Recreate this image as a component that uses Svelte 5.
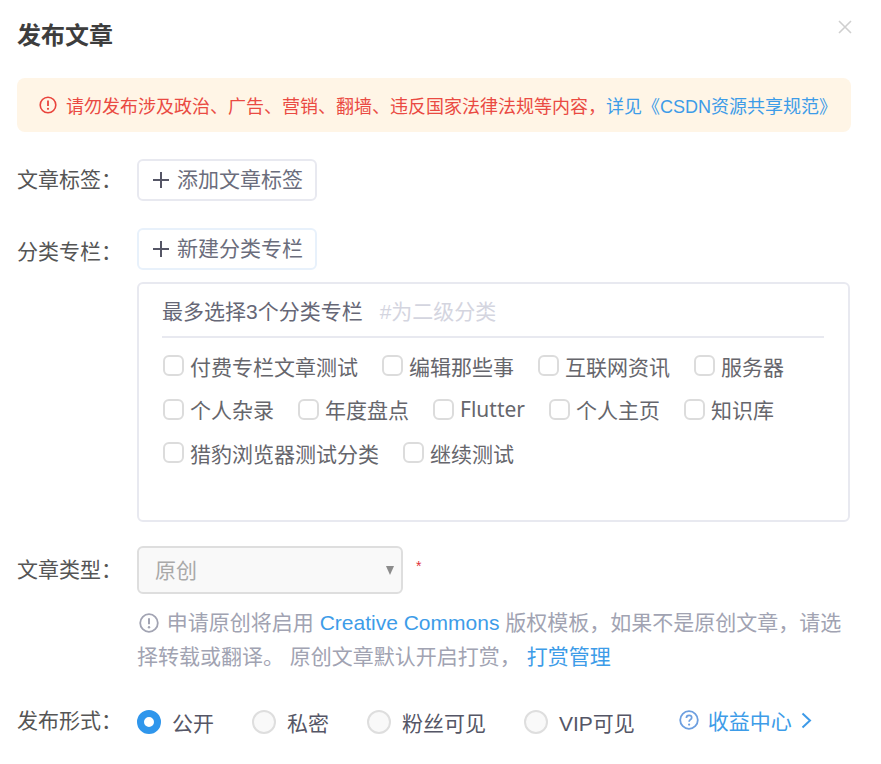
<script lang="ts">
  const columns = [
    ["付费专栏文章测试", "编辑那些事", "互联网资讯", "服务器"],
    ["个人杂录", "年度盘点", "Flutter", "个人主页", "知识库"],
    ["猎豹浏览器测试分类", "继续测试"],
  ];
  const forms = ["公开", "私密", "粉丝可见", "VIP可见"];
  let form = $state("公开");
</script>

<div class="dialog">
  <header class="head">
    <h2>发布文章</h2>
    <svg class="close" viewBox="0 0 14 14" width="14" height="14">
      <path d="M1 1l12 12M13 1L1 13" stroke="#cfcfcf" stroke-width="1.6" fill="none" />
    </svg>
  </header>

  <div class="alert">
    <svg viewBox="0 0 18 18" width="18" height="18">
      <circle cx="9" cy="9" r="7.8" stroke="#e9433b" stroke-width="1.6" fill="none" />
      <path d="M9 4.4v5.6" stroke="#e9433b" stroke-width="1.8" fill="none" />
      <circle cx="9" cy="12.8" r="1.1" fill="#e9433b" />
    </svg>
    <span class="alert-text">请勿发布涉及政治、广告、营销、翻墙、违反国家法律法规等内容，</span><a class="alert-link" href="#top">详见《CSDN资源共享规范》</a>
  </div>

  <div class="row tags">
    <span class="label">文章标签：</span>
    <button type="button" class="add"><span class="plus"></span>添加文章标签</button>
  </div>

  <div class="row cats">
    <span class="label">分类专栏：</span>
    <div class="cat-body">
      <button type="button" class="add blue"><span class="plus"></span>新建分类专栏</button>
      <div class="panel">
        <div class="panel-head">最多选择3个分类专栏<span class="sub">#为二级分类</span></div>
        <div class="checks">
          {#each columns as line}
            <div class="check-line">
              {#each line as name}
                <label class="check"><input type="checkbox" /><span class="box"></span><span class:latin={name === "Flutter"}>{name}</span></label>
              {/each}
            </div>
          {/each}
        </div>
      </div>
    </div>
  </div>

  <div class="row type">
    <span class="label">文章类型：</span>
    <div class="type-body">
      <div class="select-line">
        <div class="select">原创<span class="caret"></span></div>
        <span class="star">*</span>
      </div>
      <div class="hint">
        <div class="hint-line">
          <svg viewBox="0 0 20 20" width="20" height="20">
            <circle cx="10" cy="10" r="8.8" stroke="#a2a4b3" stroke-width="1.8" fill="none" />
            <path d="M10 5.2v6" stroke="#a2a4b3" stroke-width="2" fill="none" />
            <circle cx="10" cy="14.2" r="1.2" fill="#a2a4b3" />
          </svg>
          申请原创将启用 <a href="#top">Creative Commons</a> 版权模板，如果不是原创文章，请选
        </div>
        <div class="hint-line">择转载或翻译。 原创文章默认开启打赏， <a href="#top">打赏管理</a></div>
      </div>
    </div>
  </div>

  <div class="row pub">
    <span class="label">发布形式：</span>
    <div class="radios">
      {#each forms as f}
        <label class="radio">
          <input type="radio" name="form" value={f} bind:group={form} />
          <span class="dot"></span>{f}
        </label>
      {/each}
      <a class="income" href="#top">
        <svg viewBox="0 0 20 20" width="20" height="20">
          <circle cx="10" cy="10" r="8.8" stroke="#6d9fe0" stroke-width="1.8" fill="none" />
          <path d="M7.4 8c0-1.6 1.2-2.6 2.7-2.6s2.6 1 2.6 2.3c0 2-2.6 2-2.6 4" stroke="#6d9fe0" stroke-width="1.7" fill="none" />
          <circle cx="10.1" cy="14.6" r="1.1" fill="#6d9fe0" />
        </svg>
        收益中心
        <svg viewBox="0 0 11 17" width="11" height="17">
          <path d="M1.5 1.5L9 8.5l-7.5 7" stroke="#3d9ae8" stroke-width="2" fill="none" />
        </svg>
      </a>
    </div>
  </div>
</div>

<style>
  :global(body) {
    margin: 0;
    background: #fff;
  }

  .dialog {
    width: 834px;
    padding: 0 30px 0 17px;
    font-family: "Liberation Sans", "Noto Sans CJK SC", sans-serif;
    font-size: 21px;
    color: #555666;
  }

  .head {
    display: flex;
    justify-content: space-between;
    height: 78px;
  }

  h2 {
    margin: 0;
    padding-top: 19px;
    font-size: 24px;
    line-height: 34px;
    font-weight: 700;
    color: #3d3d3d;
  }

  .close {
    margin: 20px -1px 0 0;
  }

  .alert {
    display: flex;
    align-items: center;
    height: 54px;
    padding-left: 22px;
    background: #fff5e6;
    border-radius: 8px;
    font-size: 18px;
  }

  .alert svg {
    margin-right: 9px;
  }

  .alert-text {
    color: #ea4a42;
  }

  .alert-link {
    color: #3d9ce8;
    text-decoration: none;
  }

  .row {
    display: flex;
  }

  .label {
    flex: 0 0 120px;
    color: #555;
    line-height: 30px;
  }

  .tags {
    margin-top: 27px;
    align-items: center;
  }

  .cats {
    margin-top: 27px;
  }

  .cats .label {
    padding-top: 9px;
  }

  .add {
    display: flex;
    align-items: center;
    box-sizing: border-box;
    width: 180px;
    height: 42px;
    padding: 0 0 0 14px;
    background: #fff;
    border: 2px solid #e8e9f0;
    border-radius: 6px;
    font: inherit;
    line-height: 36px;
    color: #6b6d7c;
  }

  .add.blue {
    border-color: #e8f1fb;
  }

  .plus {
    width: 16px;
    height: 16px;
    margin-right: 8px;
    background:
      linear-gradient(#555666, #555666) center / 16px 2px no-repeat,
      linear-gradient(#555666, #555666) center / 2px 16px no-repeat;
  }

  .cat-body,
  .type-body {
    flex: 1;
  }

  .panel {
    box-sizing: border-box;
    width: 713px;
    height: 240px;
    margin-top: 12px;
    padding: 12px 24px 0 23px;
    border: 2px solid #e8e9f0;
    border-radius: 6px;
  }

  .panel-head {
    height: 40px;
    line-height: 32px;
    color: #666776;
    border-bottom: 2px solid #e8e9f0;
  }

  .sub {
    margin-left: 17px;
    color: #d4d5df;
  }

  .checks {
    padding-top: 6px;
  }

  .check-line {
    display: flex;
    gap: 23px;
    height: 43.5px;
    align-items: center;
  }

  .check {
    display: flex;
    align-items: center;
    gap: 6px;
    color: #66666c;
  }

  .check input,
  .radio input {
    display: none;
  }

  .box {
    box-sizing: border-box;
    width: 21px;
    height: 21px;
    margin-left: 1px;
    border: 2px solid #dcdcdc;
    border-radius: 6px;
    background: #fff;
  }

  .latin {
    font-family: "Noto Sans", "Noto Sans CJK SC", sans-serif;
  }

  .type {
    margin-top: 24px;
  }

  .type .label {
    padding-top: 9px;
  }

  .select-line {
    display: flex;
    align-items: flex-start;
  }

  .select {
    position: relative;
    box-sizing: border-box;
    width: 266px;
    height: 48px;
    padding-left: 16px;
    line-height: 46px;
    background: #f9f9f9;
    border: 2px solid #dedede;
    border-radius: 6px;
    color: #a9a9a9;
  }

  .caret {
    position: absolute;
    top: 18px;
    right: 7px;
    border-left: 4px solid transparent;
    border-right: 4px solid transparent;
    border-top: 9px solid #8c8c8c;
  }

  .star {
    margin: 12px 0 0 13px;
    font-size: 14px;
    color: #e0313a;
  }

  .hint {
    margin-top: 12px;
    line-height: 34px;
    color: #a1a3b2;
  }

  .hint-line {
    white-space: nowrap;
  }

  .hint svg {
    vertical-align: -3px;
    margin: 0 2px 0 2px;
  }

  .hint a {
    color: #3d9ce8;
    text-decoration: none;
  }

  .pub {
    margin-top: 32px;
  }

  .radios {
    display: flex;
    align-items: center;
    height: 30px;
    margin-top: 1px;
  }

  .radio {
    display: flex;
    align-items: center;
    margin-right: 38px;
    color: #555666;
  }

  .dot {
    box-sizing: border-box;
    width: 24px;
    height: 24px;
    margin-right: 11px;
    border: 2px solid #dedede;
    border-radius: 50%;
    background: #f9f9f9;
  }

  .radio input:checked + .dot {
    border: 7px solid #2f96ec;
    background: #fff;
  }

  .income {
    display: flex;
    align-items: center;
    gap: 9px;
    margin: -4px 0 0 6px;
    color: #3d9ce8;
    text-decoration: none;
  }
</style>
